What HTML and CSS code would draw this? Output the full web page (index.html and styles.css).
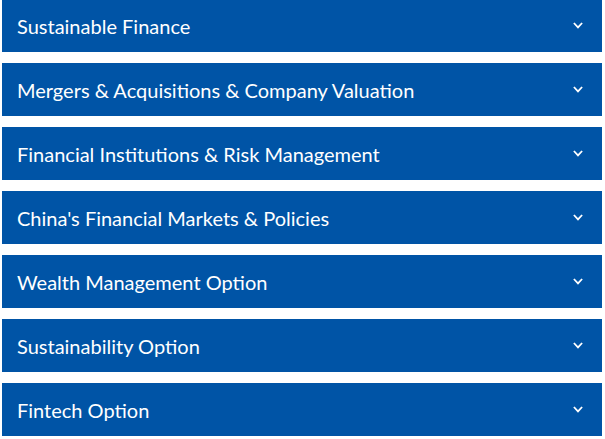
FILE: index.html
```html
<!DOCTYPE html>
<html lang="en">
<head>
<meta charset="utf-8">
<title>Options</title>
<link rel="stylesheet" href="styles.css">
</head>
<body>
<div class="accordion">
  <div class="item"><span class="title">Sustainable Finance</span><svg class="chev" width="10" height="7" viewBox="0 0 10 7"><path d="M0.9 1 L5 5.4 L9.1 1" fill="none" stroke="#fff" stroke-width="1.8"/></svg></div>
  <div class="item"><span class="title">Mergers &amp; Acquisitions &amp; Company Valuation</span><svg class="chev" width="10" height="7" viewBox="0 0 10 7"><path d="M0.9 1 L5 5.4 L9.1 1" fill="none" stroke="#fff" stroke-width="1.8"/></svg></div>
  <div class="item"><span class="title">Financial Institutions &amp; Risk Management</span><svg class="chev" width="10" height="7" viewBox="0 0 10 7"><path d="M0.9 1 L5 5.4 L9.1 1" fill="none" stroke="#fff" stroke-width="1.8"/></svg></div>
  <div class="item"><span class="title">China's Financial Markets &amp; Policies</span><svg class="chev" width="10" height="7" viewBox="0 0 10 7"><path d="M0.9 1 L5 5.4 L9.1 1" fill="none" stroke="#fff" stroke-width="1.8"/></svg></div>
  <div class="item"><span class="title">Wealth Management Option</span><svg class="chev" width="10" height="7" viewBox="0 0 10 7"><path d="M0.9 1 L5 5.4 L9.1 1" fill="none" stroke="#fff" stroke-width="1.8"/></svg></div>
  <div class="item"><span class="title">Sustainability Option</span><svg class="chev" width="10" height="7" viewBox="0 0 10 7"><path d="M0.9 1 L5 5.4 L9.1 1" fill="none" stroke="#fff" stroke-width="1.8"/></svg></div>
  <div class="item"><span class="title">Fintech Option</span><svg class="chev" width="10" height="7" viewBox="0 0 10 7"><path d="M0.9 1 L5 5.4 L9.1 1" fill="none" stroke="#fff" stroke-width="1.8"/></svg></div>
</div>
</body>
</html>
```

FILE: styles.css
```css
html, body {
  margin: 0;
  padding: 0;
  background: #fff;
}
.accordion {
  width: 600px;
  margin: -1px 0 0 2px;
  display: flex;
  flex-direction: column;
  gap: 11px;
}
.item {
  height: 53px;
  background: #0054a6;
  display: flex;
  align-items: center;
  justify-content: space-between;
  padding: 0 19px 0 15px;
  box-sizing: border-box;
  font-family: Lato, "Open Sans", sans-serif;
  font-size: 20px;
  color: #fff;
}
.chev {
  display: block;
  margin-bottom: 1px;
}
```
